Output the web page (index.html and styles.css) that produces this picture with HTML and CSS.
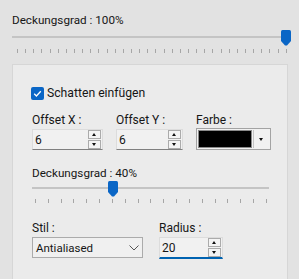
FILE: index.html
```html
<!DOCTYPE html>
<html lang="de">
<head>
    <meta charset="UTF-8">
    <title>Schatten</title>
    <link rel="stylesheet" href="styles.css">
</head>
<body>

<div class="top">
    <div class="caption">Deckungsgrad : 100%</div>
    <div class="slider slider-wide">
        <div class="track"></div>
        <svg class="thumb" style="left: 269px" width="10" height="16" viewBox="0 0 10 16"><path d="M0 1.5Q0 0 1.5 0H8.5Q10 0 10 1.5V11L6 15.5H4L0 11Z"/></svg>
    </div>
    <div class="ticks ticks-wide" id="ticks-wide"></div>
</div>

<div class="panel">
    <label class="check">
        <span class="box"><svg width="13" height="13" viewBox="0 0 13 13"><path d="M3.2 6.8L5.4 9L9.8 4.2"/></svg></span>
        Schatten einfügen
    </label>

    <div class="fields">
        <div class="field field-x">
            <div class="label">Offset X :</div>
            <div class="spin"><span class="value">6</span><span class="arrows"><span class="arrow up"></span><span class="arrow down"></span></span></div>
        </div>
        <div class="field field-y">
            <div class="label">Offset Y :</div>
            <div class="spin"><span class="value">6</span><span class="arrows"><span class="arrow up"></span><span class="arrow down"></span></span></div>
        </div>
        <div class="field">
            <div class="label">Farbe :</div>
            <div class="color"><span class="swatch"></span><span class="drop"></span></div>
        </div>
    </div>

    <div class="caption caption-inner">Deckungsgrad : 40%</div>
    <div class="slider slider-inner">
        <div class="track"></div>
        <svg class="thumb" style="left: 76px" width="10" height="16" viewBox="0 0 10 16"><path d="M0 1.5Q0 0 1.5 0H8.5Q10 0 10 1.5V11L6 15.5H4L0 11Z"/></svg>
    </div>
    <div class="ticks ticks-inner" id="ticks-inner"></div>

    <div class="fields fields-bottom">
        <div class="field">
            <div class="label">Stil :</div>
            <div class="select">
                <span class="value">Antialiased</span>
                <svg class="chevron" width="10" height="6" viewBox="0 0 10 6"><path d="M0.5 0.5L5 5L9.5 0.5"/></svg>
            </div>
        </div>
        <div class="field">
            <div class="label">Radius :</div>
            <div class="spin spin-focus"><span class="value">20</span><span class="arrows"><span class="arrow up"></span><span class="arrow down"></span></span></div>
        </div>
    </div>
</div>

<script>
    function addTicks(id, count) {
        const row = document.getElementById(id);
        for (let i = 0; i < count; i++) {
            row.appendChild(document.createElement('span'));
        }
    }

    addTicks('ticks-wide', 34);
    addTicks('ticks-inner', 19);
</script>

</body>
</html>
```

FILE: styles.css
```css
html, body {
    margin: 0;
    padding: 0;
    height: 279px;
    overflow: hidden;
}
body {
    background-color: #e2e2e2;
    font-family: Roboto, "Noto Sans", sans-serif;
    font-size: 12px;
    color: #161616;
}
.top {
    padding: 12px 0 0 12px;
}
.caption {
    font-size: 11.7px;
    line-height: 16px;
}
.slider {
    position: relative;
    height: 16px;
}
.slider .track {
    position: absolute;
    left: 0;
    right: 0;
    top: 6px;
    height: 2px;
    background-color: #c4c4c4;
}
.slider .thumb {
    position: absolute;
    top: 0;
    fill: #0a66c6;
}
.slider-wide {
    width: 276px;
    margin-top: 2px;
}
.ticks {
    display: flex;
    justify-content: space-between;
    height: 4px;
}
.ticks span {
    width: 1px;
    background-color: #a6a6a6;
}
.ticks-wide {
    width: 270px;
    margin: 3px 0 0 5px;
}

/* Shadow settings box */
.panel {
    margin: 11px 0 0 12px;
    width: 276px;
    height: 215px;
    box-sizing: border-box;
    background-color: #ebebeb;
    border: 1px solid #d6d6d6;
    border-bottom: none;
    padding: 20px 0 0 19px;
}
.check {
    display: flex;
    align-items: center;
    gap: 3px;
    height: 16px;
    margin-left: -1px;
    font-size: 12.2px;
}
.check .box {
    width: 13px;
    height: 13px;
    border-radius: 2px;
    background-color: #0a66c6;
}
.check .box svg {
    display: block;
    fill: none;
    stroke: #ffffff;
    stroke-width: 1.3;
}
.fields {
    display: flex;
    gap: 13px;
    margin-top: 11px;
}
.field .label {
    line-height: 16px;
    margin-bottom: 1px;
}
.field-x .spin {
    width: 71px;
}
.field-y .spin {
    width: 67px;
}
.spin {
    display: flex;
    align-items: center;
    box-sizing: border-box;
    height: 21px;
    background-color: #f1f1f1;
    border: 1px solid #dcdcdc;
    border-bottom-color: #808080;
    padding-left: 2px;
    font-size: 12px;
}
.spin .arrows {
    display: flex;
    flex-direction: column;
    gap: 1px;
    margin-left: auto;
    margin-right: 1px;
}
.spin .arrow {
    position: relative;
    box-sizing: border-box;
    width: 13px;
    height: 9px;
    border: 1px solid #ababab;
    background-color: #f4f4f4;
}
.spin .arrow::after {
    content: "";
    position: absolute;
    left: 3px;
    top: 2px;
    border-left: 2.5px solid transparent;
    border-right: 2.5px solid transparent;
}
.spin .up::after {
    border-bottom: 3px solid #111;
}
.spin .down::after {
    border-top: 3px solid #111;
}
.color {
    display: flex;
    gap: 1px;
    box-sizing: border-box;
    width: 75px;
    height: 22px;
    margin-top: -1px;
    padding: 1px;
    border: 1px solid #a3a3a3;
    background-color: #f1f1f1;
}
.color .swatch {
    flex: 1;
    background-color: #000;
    border: 1px solid #8a8a8a;
}
.color .drop {
    position: relative;
    width: 15px;
    border-left: 1px solid #c4c4c4;
}
.color .drop::after {
    content: "";
    position: absolute;
    left: 5px;
    top: 8px;
    border-left: 2.5px solid transparent;
    border-right: 2.5px solid transparent;
    border-top: 3px solid #111;
}
.caption-inner {
    margin-top: 16px;
    line-height: 15px;
}
.slider-inner {
    width: 237px;
}
.ticks-inner {
    width: 232px;
    margin: 2px 0 0 3px;
}
.fields-bottom {
    gap: 16px;
    margin-top: 17px;
}
.select {
    display: flex;
    align-items: center;
    box-sizing: border-box;
    width: 111px;
    height: 21px;
    border: 1px solid #ababab;
    background-color: #f0f0f0;
    padding: 0 3px 0 3px;
    font-size: 11.5px;
}
.select .chevron {
    margin-left: auto;
    fill: none;
    stroke: #555;
    stroke-width: 1;
}
.spin-focus {
    width: 64px;
    height: 22px;
    border-bottom: 2px solid #0063b1;
}
```
